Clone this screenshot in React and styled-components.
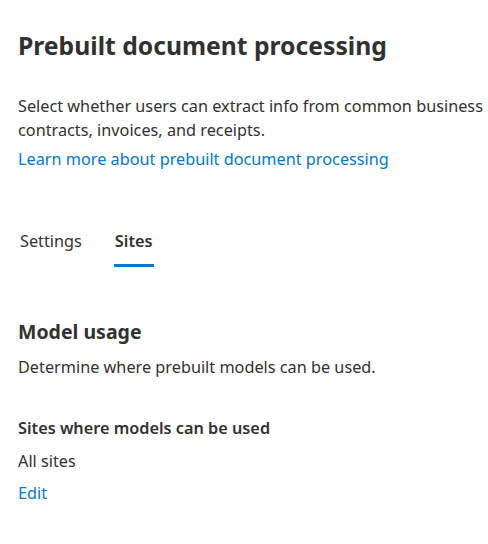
import React from "react";
import styled, { createGlobalStyle } from "styled-components";

const GlobalStyle = createGlobalStyle`
  body {
    margin: 0;
    background: #ffffff;
    font-family: "Segoe UI", "Noto Sans", "Open Sans", sans-serif;
    color: #323130;
  }
`;

const App = () => {
  return (
    <Panel>
      <GlobalStyle />
      <Title>Prebuilt document processing</Title>
      <Description>
        Select whether users can extract info from common business contracts,
        invoices, and receipts.
      </Description>
      <Link href="#">Learn more about prebuilt document processing</Link>

      <Tabs>
        <Tab>Settings</Tab>
        <Tab active>Sites</Tab>
      </Tabs>

      <Section>
        <SectionTitle>Model usage</SectionTitle>
        <Text>Determine where prebuilt models can be used.</Text>
      </Section>

      <Field>
        <Label>Sites where models can be used</Label>
        <Text>All sites</Text>
        <Link href="#">Edit</Link>
      </Field>
    </Panel>
  );
};

export default App;

/* styled-components */
const Panel = styled.div`
  width: 488px;
  height: 544px;
  box-sizing: border-box;
  padding: 28px 0 0 18px;
  overflow: hidden;
  display: flex;
  flex-direction: column;
`;
const Title = styled.h1`
  margin: 0;
  font-size: 24.7px;
  line-height: 36px;
  font-weight: 700;
  color: #323130;
  white-space: nowrap;
`;
const Description = styled.p`
  margin: 30px 0 0;
  font-size: 16.25px;
  line-height: 24px;
  color: #323130;
  width: 490px;
`;
const Link = styled.a`
  display: block;
  margin-top: 6px;
  font-size: 16.25px;
  line-height: 22px;
  color: #0078d4;
  text-decoration: none;
  align-self: flex-start;
`;
const Tabs = styled.div`
  display: flex;
  gap: 31px;
  margin-top: 60px;
  padding-left: 1px;
`;
const Tab = styled.div`
  font-size: 16.25px;
  line-height: 22px;
  font-weight: ${(p) => (p.active ? 600 : 400)};
  color: #323130;
  padding: 0 1px 12px;
  border-bottom: 3px solid ${(p) => (p.active ? "#0078d4" : "transparent")};
`;
const Section = styled.div`
  margin-top: 52px;
  display: flex;
  flex-direction: column;
  gap: 11px;
`;
const SectionTitle = styled.h2`
  margin: 0;
  font-size: 19.5px;
  line-height: 26px;
  font-weight: 700;
`;
const Text = styled.div`
  font-size: 16.25px;
  line-height: 22px;
`;
const Field = styled.div`
  margin-top: 39px;
  display: flex;
  flex-direction: column;
  gap: 11px;
  & > a {
    margin-top: -1px;
  }
`;
const Label = styled.div`
  font-size: 16.25px;
  line-height: 22px;
  font-weight: 600;
`;
